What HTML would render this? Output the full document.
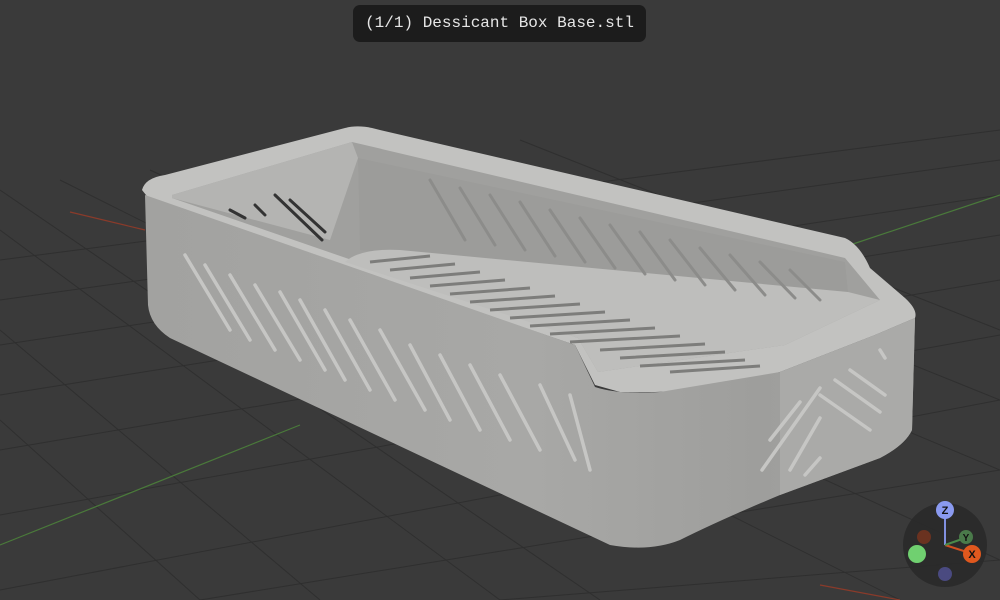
<!DOCTYPE html>
<html><head><meta charset="utf-8"><style>
html,body{margin:0;padding:0;background:#3a3a3a;width:1000px;height:600px;overflow:hidden}
.pill{position:absolute;left:353px;top:5px;width:293px;height:37px;background:#1c1c1c;border-radius:7px;color:#e6e6e6;font:16px "Liberation Mono",monospace;line-height:37px;text-align:center}
</style></head><body>
<svg width="1000" height="600" style="position:absolute;left:0;top:0">
<defs>
<linearGradient id="front" x1="0" y1="0" x2="1" y2="0">
<stop offset="0" stop-color="#a2a2a0"/><stop offset="0.5" stop-color="#a8a8a6"/><stop offset="0.8" stop-color="#9e9e9c"/><stop offset="1" stop-color="#a6a6a4"/>
</linearGradient>
</defs>
<rect width="1000" height="600" fill="#3a3a3a"/>
<g stroke="#2f2f2f" stroke-width="1" fill="none">
<path d="M0 260L1000 130M0 300L1000 160M0 345L1000 195M0 395L1000 235M0 450L1000 280M0 515L1000 335M0 590L1000 400M200 600L1000 470M500 600L1000 560"/>
<path d="M0 190L600 600M0 230L500 600M60 180L900 600M150 170L1000 560M260 160L1000 470M380 150L1000 400M520 140L1000 330M0 330L320 600M0 420L200 600"/>
</g>
<path d="M70 212L145 230" stroke="#8a3a2a" stroke-width="1.2"/>
<path d="M0 545L300 425" stroke="#4a7a3a" stroke-width="1.2"/>
<path d="M850 245L1000 195" stroke="#4a7a3a" stroke-width="1.2"/>
<path d="M820 585L900 600" stroke="#8a3a2a" stroke-width="1.2"/>
<!-- top rim -->
<path d="M142 190Q145 178 165 175L345 128Q360 124 380 130L845 238Q860 245 870 268L905 298Q918 310 915 318L875 335L780 372Q700 395 620 392L595 385L575 345L150 200Z" fill="#c2c2c0"/>
<!-- inner cavity -->
<path d="M172 195L352 142L845 258L880 300L785 345L598 372L578 338L172 198Z" fill="#a0a09e"/>
<path d="M172 195L352 142L358 158L330 240L172 198Z" fill="#b4b4b2"/>
<path d="M358 158L845 262L848 292L360 250Z" fill="#9c9c9a"/>
<!-- floor grate -->
<path d="M345 262Q360 248 400 250L848 292L880 300L785 345L598 372L578 338Z" fill="#bebebc"/>
<g stroke="#7d7d7b" stroke-width="3">
<path d="M370 262L430 256M390 270L455 264M410 278L480 272M430 286L505 280M450 294L530 288M470 302L555 296M490 310L580 304M510 318L605 312M530 326L630 320M550 334L655 328M570 342L680 336M600 350L705 344M620 358L725 352M640 366L745 360M670 372L760 366"/>
</g>
<g stroke="#8c8c8a" stroke-width="3" stroke-linecap="round">
<path d="M430 180L465 240M460 188L495 245M490 195L525 250M520 202L555 256M550 210L585 262M580 218L615 268M610 225L645 274M640 232L675 280M670 240L705 285M700 248L735 290M730 255L765 295M760 262L795 298M790 270L820 300"/>
</g>
<g stroke="#333" stroke-width="3" stroke-linecap="round"><path d="M275 195L322 240M290 200L325 232M230 210L245 218M255 205L265 215"/></g>
<!-- front face -->
<path d="M145 195L575 345L595 387Q620 395 660 392L780 372L875 335L915 318L912 430Q905 445 880 458L780 495Q720 520 680 540Q650 552 610 545L170 338Q150 325 148 305Z" fill="url(#front)"/>
<path d="M780 372L875 335L915 318L912 430Q905 445 880 458L780 495Z" fill="#aaaaa8"/>
<g stroke="#c6c6c4" stroke-width="3.5" stroke-linecap="round">
<path d="M185 255L230 330M205 265L250 340M230 275L275 350M255 285L300 360M280 292L325 370M300 300L345 380M325 310L370 390M350 320L395 400M380 330L425 410M410 345L450 420M440 355L480 430M470 365L510 440M500 375L540 450M540 385L575 460M570 395L590 470"/>
<path d="M770 440L800 402M762 470L820 388M790 470L820 418M805 475L820 458M820 395L870 430M835 380L880 412M850 370L885 395M880 350L885 358"/>
</g>
<!-- gizmo -->
<circle cx="945" cy="545" r="42" fill="#2a2a2a" opacity="0.9"/>
<line x1="945" y1="545" x2="945" y2="512" stroke="#8190e0" stroke-width="2"/>
<line x1="945" y1="545" x2="970" y2="553" stroke="#d05020" stroke-width="2"/>
<line x1="945" y1="545" x2="965" y2="538" stroke="#4a8a4a" stroke-width="2"/>
<circle cx="924" cy="537" r="7" fill="#6a3220"/>
<circle cx="917" cy="554" r="9" fill="#70d070"/>
<circle cx="945" cy="574" r="7" fill="#4a4a80"/>
<circle cx="966" cy="537" r="7" fill="#4a7a4a"/>
<text x="966" y="541" font-family="Liberation Sans" font-size="10" font-weight="bold" text-anchor="middle" fill="#111">Y</text>
<circle cx="945" cy="510" r="9" fill="#8a9af0"/>
<text x="945" y="514" font-family="Liberation Sans" font-size="11" font-weight="bold" text-anchor="middle" fill="#111">Z</text>
<circle cx="972" cy="554" r="9" fill="#e0581e"/>
<text x="972" y="558" font-family="Liberation Sans" font-size="11" font-weight="bold" text-anchor="middle" fill="#111">X</text>
</svg>
<div class="pill">(1/1) Dessicant Box Base.stl</div>
</body></html>
